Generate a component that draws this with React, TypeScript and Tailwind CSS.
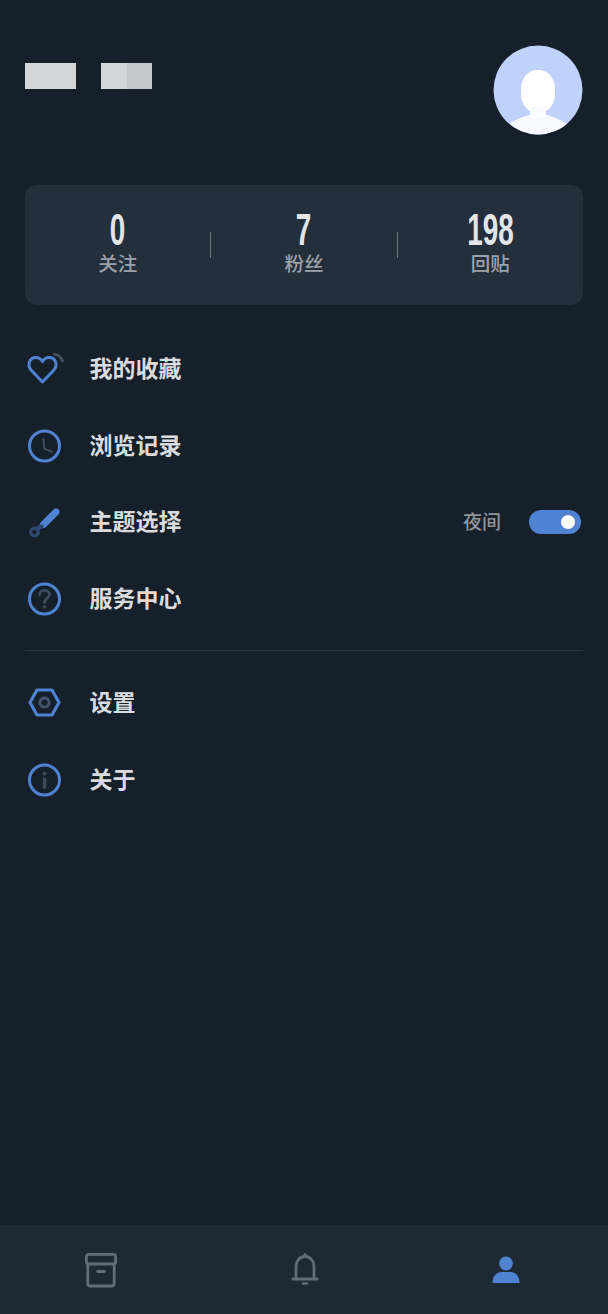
import React from "react";

const BLUE = "#4f83d1";
const DIM = "#3c4a5c";
const GRAY = "#646c76";

const Icon = ({ children, w = 40, h = 40 }: { children: React.ReactNode; w?: number; h?: number }) => (
  <svg width={w} height={h} viewBox={`0 0 ${w} ${h}`} fill="none" strokeLinecap="round" strokeLinejoin="round">
    {children}
  </svg>
);

const Heart = () => (
  <Icon>
    <path d="M17.5 33 L6.5 21.5 C1.5 16 4.5 8.5 11 8.5 C13.8 8.5 16 10 17.5 12.5 C19 10 21.2 8.5 24 8.5 C30.5 8.5 33.5 16 28.5 21.5 Z" stroke={BLUE} strokeWidth="3" />
    <path d="M29.5 5.2 C33 5.6 36 8 37.5 12" stroke="#4a5563" strokeWidth="2.6" />
  </Icon>
);

const Clock = () => (
  <Icon>
    <circle cx="19.5" cy="20" r="15" stroke={BLUE} strokeWidth="3" />
    <path d="M18.5 13 L19.3 22.8 L26.7 25.5" stroke={DIM} strokeWidth="2.2" />
  </Icon>
);

const Brush = () => (
  <Icon>
    <path d="M18.5 22.5 L31 10" stroke={BLUE} strokeWidth="7" />
    <circle cx="9.5" cy="30" r="3.8" stroke="#2f4a72" strokeWidth="3.2" />
    <path d="M12 26.5 L16.5 24.5" stroke="#2f4a72" strokeWidth="4.4" />
  </Icon>
);

const Question = () => (
  <Icon>
    <circle cx="19.5" cy="20" r="15" stroke={BLUE} strokeWidth="3" />
    <path d="M14.5 16 C14.5 9.8 24.5 10 24.5 15.8 C24.5 19.5 19.5 19.5 19.5 23.5" stroke={DIM} strokeWidth="2.8" />
    <circle cx="19.5" cy="28" r="1.8" fill={DIM} />
  </Icon>
);

const Hex = () => (
  <Icon>
    <path d="M5 19.5 L12 7 H27 L34 19.5 L27 32 H12 Z" stroke={BLUE} strokeWidth="3.2" />
    <circle cx="19.5" cy="19.5" r="4.6" stroke="#44546c" strokeWidth="3" />
  </Icon>
);

const Info = () => (
  <Icon>
    <circle cx="19.5" cy="20" r="15" stroke={BLUE} strokeWidth="3" />
    <circle cx="19.5" cy="13.5" r="2" fill={DIM} />
    <path d="M19.5 19 V27.5" stroke={DIM} strokeWidth="3.4" />
  </Icon>
);

const Archive = () => (
  <Icon w={34} h={36}>
    <rect x="2.4" y="2.4" width="29.2" height="9.6" rx="2" stroke={GRAY} strokeWidth="2.8" />
    <path d="M3.8 12 V31.5 C3.8 33 4.8 34 6.3 34 H27.7 C29.2 34 30.2 33 30.2 31.5 V12" stroke={GRAY} strokeWidth="2.8" />
    <path d="M13.5 19.5 H20.5" stroke={GRAY} strokeWidth="2.8" />
  </Icon>
);

const Bell = () => (
  <Icon w={28} h={36}>
    <path d="M5 26 V13 C5 8 9 3.5 14 3.5 C19 3.5 23 8 23 13 V26" stroke={GRAY} strokeWidth="2.8" />
    <path d="M1.8 26 H26.2" stroke={GRAY} strokeWidth="2.8" />
    <path d="M14 1.5 V3.5" stroke={GRAY} strokeWidth="3" />
    <path d="M12 30.5 H16" stroke={GRAY} strokeWidth="2.6" />
  </Icon>
);

const Person = () => (
  <Icon w={28} h={28}>
    <ellipse cx="14" cy="7.5" rx="6.8" ry="7" fill={BLUE} />
    <path d="M0.5 27 C0.5 19.5 5 16 9.5 16 H18.5 C23 16 27.5 19.5 27.5 27 Z" fill={BLUE} />
  </Icon>
);

const Avatar = () => (
  <svg width="90" height="90" viewBox="0 0 90 90" className="block">
    <defs>
      <clipPath id="avatarClip"><circle cx="45" cy="45" r="44.5" /></clipPath>
    </defs>
    <g clipPath="url(#avatarClip)">
      <rect width="90" height="90" fill="#c0d2fa" />
      <path d="M10 90 C13 77 24 74 36 70 L54 70 C66 74 77 77 80 90 Z" fill="#f7f9fe" />
      <rect x="28" y="25" width="34" height="43" rx="16" ry="19" fill="#ffffff" />
      <rect x="37" y="62" width="16" height="11" fill="#fbfcff" />
    </g>
  </svg>
);

const Stat = ({ value, label }: { value: string; label: string }) => (
  <div className="flex-1 flex flex-col items-center">
    <div className="h-[40px] leading-[40px] text-[45px] font-bold text-[#e3e5e9] scale-x-[0.62] [font-family:'Liberation_Sans',sans-serif]">
      {value}
    </div>
    <div className="h-[26px] leading-[26px] text-[19.5px] font-medium text-[#9ba1a9]">{label}</div>
  </div>
);

const Row = ({ icon, label, children }: { icon: React.ReactNode; label: string; children?: React.ReactNode }) => (
  <div className="h-[76.5px] flex items-center">
    <div className="w-[40px] h-[40px] shrink-0">{icon}</div>
    <div className="ml-[24.5px] flex-1 pb-[4px] text-[23px] font-bold text-[#d9dbdf]">{label}</div>
    {children}
  </div>
);

export default function App() {
  return (
    <div className="w-[608px] h-[1314px] bg-[#15202b] flex flex-col overflow-hidden [font-family:'Noto_Sans_CJK_SC','Liberation_Sans',sans-serif]">
      <div className="flex-1 px-[25px]">
        <div className="pt-[45px] flex items-start justify-between">
          <div className="mt-[18px] flex gap-[25px]">
            <div className="w-[51px] h-[26px] bg-[#d4d6d8]" />
            <div className="w-[51px] h-[26px] flex">
              <div className="flex-1 bg-[#d4d6d8]" />
              <div className="flex-1 bg-[#c4c8cc]" />
            </div>
          </div>
          <Avatar />
        </div>

        <div className="mt-[50px] h-[120px] rounded-[12px] bg-[#232f3d] flex items-start pt-[25px]">
          <Stat value="0" label="关注" />
          <div className="w-px h-[26px] mt-[22px] bg-[#6d7885] shrink-0" />
          <Stat value="7" label="粉丝" />
          <div className="w-px h-[26px] mt-[22px] bg-[#6d7885] shrink-0" />
          <Stat value="198" label="回贴" />
        </div>

        <div className="mt-[26px]">
          <Row icon={<Heart />} label="我的收藏" />
          <Row icon={<Clock />} label="浏览记录" />
          <Row icon={<Brush />} label="主题选择">
            <span className="text-[19px] font-medium text-[#8f959c] pb-[2px]">夜间</span>
            <div className="ml-[28px] mr-[2px] w-[52px] h-[24px] rounded-full bg-[#4f83d1] flex items-center justify-end pr-[6px]">
              <div className="w-[14px] h-[14px] rounded-full bg-white" />
            </div>
          </Row>
          <Row icon={<Question />} label="服务中心" />
        </div>

        <div className="mt-[13px] mb-[14px] h-px bg-[#2c3744]" />

        <Row icon={<Hex />} label="设置" />
        <Row icon={<Info />} label="关于" />
      </div>

      <div className="h-[89px] shrink-0 bg-[#1d2935] flex items-start pt-[27px] pl-[84px] pr-[88px] justify-between">
        <Archive />
        <div className="mt-[1px]"><Bell /></div>
        <div className="mt-[4px]"><Person /></div>
      </div>
    </div>
  );
}
